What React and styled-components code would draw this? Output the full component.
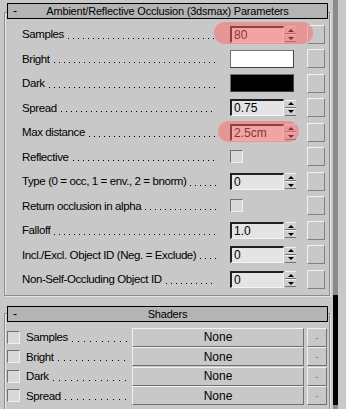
import styled, { createGlobalStyle } from "styled-components";

const GlobalStyle = createGlobalStyle`
  body {
    margin: 0;
    background: #c8c8c8;
    font-family: "Liberation Sans", Arial, sans-serif;
  }
`;

const params = [
  { label: "Samples", kind: "spin", value: "80", mark: { left: 209, top: 0, width: 99, height: 22 } },
  { label: "Bright", kind: "color", color: "#ffffff" },
  { label: "Dark", kind: "color", color: "#000000" },
  { label: "Spread", kind: "spin", value: "0.75" },
  { label: "Max distance", kind: "spin", value: "2.5cm", mark: { left: 213, top: 1, width: 81, height: 21 } },
  { label: "Reflective", kind: "check" },
  { label: "Type (0 = occ, 1 = env., 2 = bnorm)", kind: "spin", value: "0" },
  { label: "Return occlusion in alpha", kind: "check" },
  { label: "Falloff", kind: "spin", value: "1.0" },
  { label: "Incl./Excl. Object ID (Neg. = Exclude)", kind: "spin", value: "0" },
  { label: "Non-Self-Occluding Object ID", kind: "spin", value: "0" },
];

const shaders = ["Samples", "Bright", "Dark", "Spread"];

function Control({ p }) {
  if (p.kind === "color") return <Swatch $color={p.color} />;
  if (p.kind === "check") return <CheckBox />;
  return (
    <>
      <Field>{p.value}</Field>
      <Spinner>
        <SpinHalf><ArrowUp /></SpinHalf>
        <SpinHalf><ArrowDown /></SpinHalf>
      </Spinner>
    </>
  );
}

export default function App() {
  return (
    <>
      <GlobalStyle />
      <Screen>
        <Panel>
          <RolloutHeader $height={18} $top={3}>
            <Minus>-</Minus>
            <Title>Ambient/Reflective Occlusion (3dsmax) Parameters</Title>
          </RolloutHeader>
          <GroupBox $shift={7} $pad="9px 0 3px">
            {params.map((p) => (
              <ParamRow key={p.label}>
                <LabelCell>
                  <Label>{p.label}</Label>
                  <Leader $step={5} />
                </LabelCell>
                <ControlSlot>
                  <Control p={p} />
                </ControlSlot>
                <SideButton />
                {p.mark && (
                  <Highlight
                    style={{ left: p.mark.left, top: p.mark.top, width: p.mark.width, height: p.mark.height }}
                  />
                )}
              </ParamRow>
            ))}
          </GroupBox>

          <RolloutHeader $height={16} $top={10}>
            <Minus>-</Minus>
            <Title>Shaders</Title>
          </RolloutHeader>
          <GroupBox $shift={9} $pad="14px 0 20px">
            {shaders.map((s) => (
              <ShaderRow key={s}>
                <CheckBox $size={13} />
                <ShaderLabel>{s}</ShaderLabel>
                <Leader $step={6} />
                <MapButton>None</MapButton>
                <DashButton>-</DashButton>
              </ShaderRow>
            ))}
          </GroupBox>
        </Panel>
        <ScrollTrack>
          <Thumb />
        </ScrollTrack>
      </Screen>
    </>
  );
}

const Screen = styled.div`
  display: flex;
  width: 346px;
  height: 409px;
  overflow: hidden;
  background: #c8c8c8;
  font-size: 11px;
  color: #000;
`;

const Panel = styled.div`
  width: 333px;
  flex: none;
  display: flex;
  flex-direction: column;
`;

const RolloutHeader = styled.div`
  position: relative;
  z-index: 1;
  box-sizing: border-box;
  margin: ${(p) => p.$top}px 0 0 7px;
  width: 321px;
  height: ${(p) => p.$height}px;
  border: 1px solid #000;
  background: #b4b4b4;
  display: flex;
  align-items: center;
`;

const Minus = styled.span`
  width: 10px;
  padding-left: 5px;
  font-size: 12px;
`;

const Title = styled.span`
  flex: 1;
  text-align: center;
  padding-right: 15px;
  font-size: 11px;
  letter-spacing: -0.2px;
`;

const GroupBox = styled.div`
  position: relative;
  box-sizing: border-box;
  margin: -${(p) => p.$shift}px 0 0 4px;
  width: 326px;
  padding: ${(p) => p.$pad};
  border: 1px solid #8c8c8c;
  box-shadow: inset 1px 1px 0 #e6e6e6, 1px 1px 0 #e6e6e6;
`;

const ParamRow = styled.div`
  position: relative;
  height: 24.5px;
  display: grid;
  grid-template-columns: minmax(0, 1fr) 66px 18px;
  column-gap: 11px;
  align-items: center;
  padding: 0 4px 0 17px;
`;

const LabelCell = styled.div`
  display: flex;
  align-items: center;
  min-width: 0;
  overflow: hidden;
`;

const Label = styled.span`
  flex: none;
  font-size: 11.5px;
  letter-spacing: -0.4px;
  white-space: nowrap;
`;

const Leader = styled.span`
  flex: 1 1 0;
  min-width: 0;
  height: 1px;
  margin: 8px 3px 0 4px;
  background-image: linear-gradient(to right, #000 1px, transparent 1px);
  background-size: ${(p) => p.$step}px 1px;
  background-repeat: repeat-x;
`;

const ControlSlot = styled.div`
  height: 18px;
  display: flex;
  align-items: center;
`;

const Field = styled.div`
  box-sizing: border-box;
  flex: none;
  width: 54px;
  height: 17px;
  padding: 1px 0 0 2px;
  background: #e4e4e4;
  border-top: 2px solid #202020;
  border-left: 2px solid #202020;
  border-bottom: 1px solid #f4f4f4;
  border-right: 1px solid #f4f4f4;
  font-size: 12px;
  line-height: 13px;
`;

const Spinner = styled.div`
  flex: none;
  margin-left: 1px;
  width: 11px;
  height: 16px;
  display: flex;
  flex-direction: column;
`;

const SpinHalf = styled.div`
  flex: 1;
  display: flex;
  align-items: center;
  justify-content: center;
  background: #d0d0d0;
  border-top: 1px solid #f0f0f0;
  border-bottom: 1px solid #707070;
`;

const ArrowUp = styled.span`
  width: 0;
  height: 0;
  border-left: 3px solid transparent;
  border-right: 3px solid transparent;
  border-bottom: 3px solid #000;
`;

const ArrowDown = styled(ArrowUp)`
  border-bottom: none;
  border-top: 3px solid #000;
`;

const Swatch = styled.div`
  box-sizing: border-box;
  flex: none;
  width: 64px;
  height: 18px;
  background: ${(p) => p.$color};
  border-top: 1px solid #707070;
  border-left: 1px solid #707070;
  border-right: 1px solid #404040;
  border-bottom: 1px solid #404040;
`;

const CheckBox = styled.div`
  box-sizing: border-box;
  flex: none;
  width: ${(p) => p.$size || 13}px;
  height: ${(p) => p.$size || 13}px;
  background: #d8d8d8;
  border-top: 1px solid #707070;
  border-left: 1px solid #707070;
  border-right: 1px solid #f0f0f0;
  border-bottom: 1px solid #f0f0f0;
`;

const SideButton = styled.div`
  box-sizing: border-box;
  width: 18px;
  height: 19px;
  background: #c8c8c8;
  border-top: 1px solid #f2f2f2;
  border-left: 1px solid #f2f2f2;
  border-right: 1px solid #808080;
  border-bottom: 1px solid #808080;
`;

const Highlight = styled.div`
  position: absolute;
  z-index: 2;
  border-radius: 12px;
  background: rgba(255, 100, 100, 0.5);
  pointer-events: none;
`;

const ShaderRow = styled.div`
  height: 19.5px;
  display: flex;
  align-items: center;
  padding-left: 2px;
`;

const ShaderLabel = styled.span`
  margin-left: 6px;
  font-size: 11.5px;
  letter-spacing: -0.4px;
`;

const MapButton = styled.div`
  box-sizing: border-box;
  flex: none;
  width: 172px;
  height: 19px;
  display: flex;
  align-items: center;
  justify-content: center;
  font-size: 12px;
  background: #c8c8c8;
  border-top: 1px solid #f2f2f2;
  border-left: 1px solid #f2f2f2;
  border-right: 1px solid #707070;
  border-bottom: 1px solid #707070;
`;

const DashButton = styled(MapButton)`
  width: 20px;
  margin: 0 2px 0 3px;
  color: #808080;
  font-size: 10px;
`;

const ScrollTrack = styled.div`
  width: 5px;
  flex: none;
  height: 100%;
  background: #8a8a8a;
  display: flex;
  flex-direction: column;
`;

const Thumb = styled.div`
  margin-top: 295px;
  height: 110px;
  background: #000;
`;
